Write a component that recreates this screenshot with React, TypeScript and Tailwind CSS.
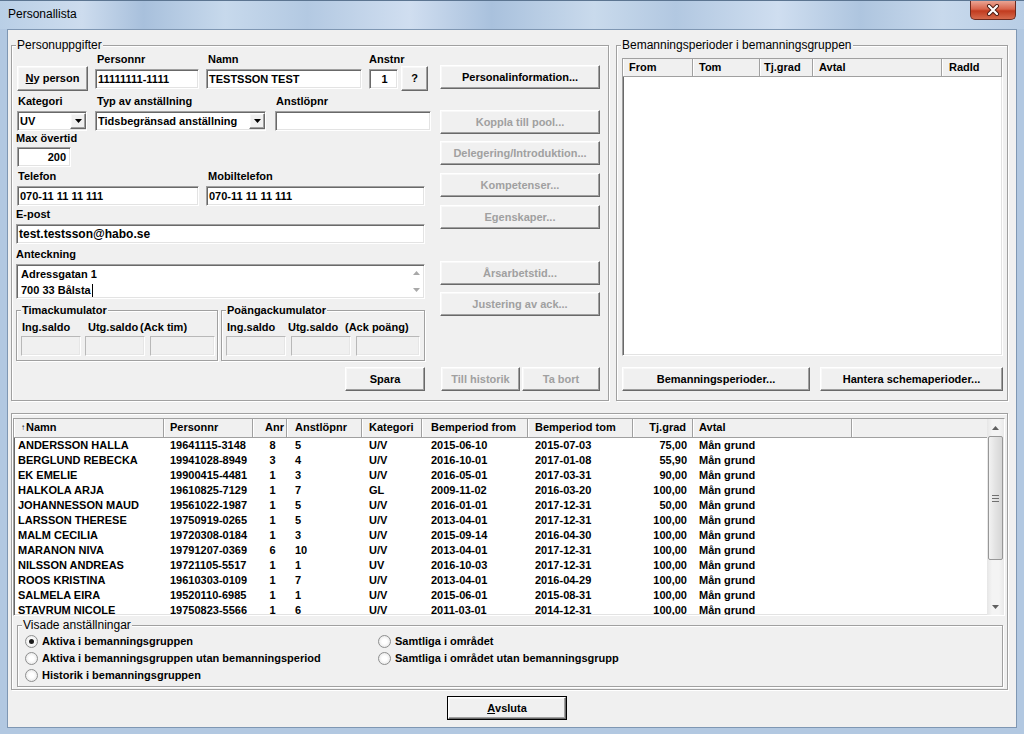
import React from 'react';

type P = { className?: string; children?: React.ReactNode };

const sunken =
  'border border-t-[#a0a0a0] border-l-[#a0a0a0] border-b-white border-r-white shadow-[inset_1px_1px_0_#696969,inset_-1px_-1px_0_#e3e3e3]';
const raised =
  'border border-t-white border-l-white border-b-[#696969] border-r-[#696969] shadow-[inset_-1px_-1px_0_#a0a0a0,inset_1px_1px_0_#f8f8f8] bg-[#f0f0f0]';
const etched = 'border border-[#a0a0a0] shadow-[inset_1px_1px_0_#fff,1px_1px_0_#fff]';

function Label({ className = '', children }: P) {
  return <div className={`h-[14px] leading-[14px] text-[11px] font-bold whitespace-nowrap ${className}`}>{children}</div>;
}

function Input({ className = '', children }: P) {
  return (
    <div className={`h-[20px] bg-white ${sunken} text-[11px] font-bold leading-[18px] pl-[2px] whitespace-nowrap overflow-hidden ${className}`}>
      {children}
    </div>
  );
}

function Dim({ className = '' }: P) {
  return <div className={`h-[20px] border border-t-[#b8b8b8] border-l-[#b8b8b8] border-b-white border-r-white shadow-[inset_-1px_-1px_0_#e6e6e6] ${className}`} />;
}

function Btn({ className = '', children, off = false }: P & { off?: boolean }) {
  return (
    <div
      className={`${raised} flex items-center justify-center text-[11px] font-bold whitespace-nowrap ${
        off ? 'text-[#a0a0a0]' : 'text-black'
      } ${className}`}
    >
      {children}
    </div>
  );
}

function Arrow({ up = false, color = '#000' }: { up?: boolean; color?: string }) {
  return (
    <svg width="7" height="4" viewBox="0 0 7 4">
      <path d={up ? 'M0 4 L3.5 0 L7 4 Z' : 'M0 0 L7 0 L3.5 4 Z'} fill={color} />
    </svg>
  );
}

function Select({ className = '', children }: P) {
  return (
    <div className={`h-[20px] bg-white ${sunken} flex items-center text-[11px] font-bold pl-[2px] ${className}`}>
      <span className="flex-1 whitespace-nowrap overflow-hidden">{children}</span>
      <div className={`${raised} w-[16px] h-[16px] flex items-center justify-center`}>
        <Arrow />
      </div>
    </div>
  );
}

function Group({ className = '', title, bold = false, children }: P & { title: string; bold?: boolean }) {
  return (
    <div className={`relative ${etched} ${className}`}>
      <div
        className={`absolute -top-[8px] left-[4px] px-[1px] bg-[#f0f0f0] leading-[14px] whitespace-nowrap ${
          bold ? 'text-[11px] font-bold' : 'text-[12px]'
        }`}
      >
        {title}
      </div>
      {children}
    </div>
  );
}

function Radio({ on = false, children }: P & { on?: boolean }) {
  return (
    <div className="h-[17px] flex items-center">
      <div className="w-[13px] h-[13px] rounded-full border border-[#8e8f8f] bg-[radial-gradient(circle,#ffffff_30%,#dedede)] flex items-center justify-center">
        {on && <div className="w-[5px] h-[5px] rounded-full bg-[#1c1c1c]" />}
      </div>
      <span className="ml-[4px] text-[11px] font-bold whitespace-nowrap">{children}</span>
    </div>
  );
}

const rows = [
  ['ANDERSSON HALLA', '19641115-3148', '8', '5', 'U/V', '2015-06-10', '2015-07-03', '75,00', 'Mån grund'],
  ['BERGLUND REBECKA', '19941028-8949', '3', '4', 'U/V', '2016-10-01', '2017-01-08', '55,90', 'Mån grund'],
  ['EK EMELIE', '19900415-4481', '1', '3', 'U/V', '2016-05-01', '2017-03-31', '90,00', 'Mån grund'],
  ['HALKOLA ARJA', '19610825-7129', '1', '7', 'GL', '2009-11-02', '2016-03-20', '100,00', 'Mån grund'],
  ['JOHANNESSON MAUD', '19561022-1987', '1', '5', 'U/V', '2016-01-01', '2017-12-31', '50,00', 'Mån grund'],
  ['LARSSON THERESE', '19750919-0265', '1', '5', 'U/V', '2013-04-01', '2017-12-31', '100,00', 'Mån grund'],
  ['MALM CECILIA', '19720308-0184', '1', '3', 'U/V', '2015-09-14', '2016-04-30', '100,00', 'Mån grund'],
  ['MARANON NIVA', '19791207-0369', '6', '10', 'U/V', '2013-04-01', '2017-12-31', '100,00', 'Mån grund'],
  ['NILSSON ANDREAS', '19721105-5517', '1', '1', 'UV', '2016-10-03', '2017-12-31', '100,00', 'Mån grund'],
  ['ROOS KRISTINA', '19610303-0109', '1', '7', 'U/V', '2013-04-01', '2016-04-29', '100,00', 'Mån grund'],
  ['SALMELA EIRA', '19520110-6985', '1', '1', 'U/V', '2015-06-01', '2015-08-31', '100,00', 'Mån grund'],
  ['STAVRUM NICOLE', '19750823-5566', '1', '6', 'U/V', '2011-03-01', '2014-12-31', '100,00', 'Mån grund'],
];

// column widths + cell padding for the staff list
const cols = [
  { w: 'w-[150px]', cell: 'pl-[4px]', head: 'pl-[7px]' },
  { w: 'w-[89px]', cell: 'pl-[6px]', head: 'pl-[6px]' },
  { w: 'w-[34px]', cell: 'text-center pl-[5px]', head: 'text-center pl-[10px]' },
  { w: 'w-[75px]', cell: 'pl-[8px]', head: 'pl-[8px]' },
  { w: 'w-[60px]', cell: 'pl-[7px]', head: 'pl-[7px]' },
  { w: 'w-[106px]', cell: 'pl-[9px]', head: 'pl-[9px]' },
  { w: 'w-[105px]', cell: 'pl-[7px]', head: 'pl-[7px]' },
  { w: 'w-[60px]', cell: 'text-right pr-[6px]', head: 'text-right pr-[6px]' },
  { w: 'w-[159px]', cell: 'pl-[6px]', head: 'pl-[6px]' },
];
const heads = ['Namn', 'Personnr', 'Anr', 'Anstlöpnr', 'Kategori', 'Bemperiod from', 'Bemperiod tom', 'Tj.grad', 'Avtal'];

const headCell = 'h-full border-r border-r-[#a0a0a0] shadow-[inset_1px_0_0_#fff] leading-[17px] text-[11px] font-bold whitespace-nowrap';

export default function App() {
  return (
    <div className="w-[1024px] h-[734px] overflow-hidden flex flex-col bg-[#b2c8e1] font-['Liberation_Sans',Arial,sans-serif] text-black">
      {/* Title bar */}
      <div className="h-[29px] flex items-start bg-[linear-gradient(90deg,#b9cfe6_0%,#cddcee_8%,#a8c0dc_14%,#c7d9ec_22%,#b3c9e2_30%,#d0def0_40%,#a9c1dd_48%,#c9daec_58%,#b2c8e1_66%,#cfdef0_76%,#aec5df_84%,#c8d9ec_92%,#b8cde5_100%)] border-t border-[#5c7591]">
        <div className="pl-[8px] pt-[6px] text-[12px] leading-[14px]">Personallista</div>
        <div className="ml-auto mr-[8px] w-[46px] h-[19px] rounded-b-[5px] border border-t-0 border-[#6b2a1f] bg-[linear-gradient(#eaa493,#d8644b_45%,#c13b1f_55%,#d56a4c)] flex items-center justify-center">
          <svg width="14" height="12" viewBox="0 0 14 12">
            <path d="M3 2 L11 10 M11 2 L3 10" stroke="#4a1a12" strokeWidth="4" strokeLinecap="round" />
            <path d="M3 2 L11 10 M11 2 L3 10" stroke="#fff" strokeWidth="2.2" strokeLinecap="round" />
          </svg>
        </div>
      </div>

      {/* Client area */}
      <div className="mx-[7px] w-[1010px] h-[699px] border border-[#7f97b3] bg-[#f0f0f0] flex flex-col">
        {/* Top section */}
        <div className="flex pl-[3px] pt-[15px] gap-[7px]">
          <Group title="Personuppgifter" className="w-[598px] h-[356px] flex pl-[5px] pr-[8px]">
            {/* Form */}
            <div className="w-[415px] flex flex-col pt-[6px]">
              <div className="flex items-end h-[39px]">
                <Btn className="w-[71px] h-[25px]">
                  <span className="underline">N</span>y person
                </Btn>
                <div className="ml-[7px] w-[104px] mb-[2px]">
                  <Label className="pl-[2px]">Personnr</Label>
                  <Input className="mt-[3px]">11111111-1111</Input>
                </div>
                <div className="ml-[7px] w-[156px] mb-[2px]">
                  <Label className="pl-[2px]">Namn</Label>
                  <Input className="mt-[3px]">TESTSSON TEST</Input>
                </div>
                <div className="ml-[7px] w-[29px] mb-[2px]">
                  <Label>Anstnr</Label>
                  <Input className="mt-[3px] text-center pl-0">1</Input>
                </div>
                <Btn className="ml-[3px] w-[27px] h-[25px]">?</Btn>
              </div>

              <div className="flex mt-[3px]">
                <div className="w-[70px]">
                  <Label className="pl-[1px]">Kategori</Label>
                  <Select className="mt-[3px]">UV</Select>
                </div>
                <div className="ml-[8px] w-[171px]">
                  <Label className="pl-[2px]">Typ av anställning</Label>
                  <Select className="mt-[3px]">Tidsbegränsad anställning</Select>
                </div>
                <div className="ml-[9px] w-[156px]">
                  <Label className="pl-[1px]">Anstlöpnr</Label>
                  <Input className="mt-[3px]" />
                </div>
              </div>

              <div className="flex flex-col">
                <Label className="-ml-[1px]">Max övertid</Label>
                <Input className="mt-[2px] w-[54px] text-right pr-[4px]">200</Input>
              </div>

              <div className="flex mt-[2px]">
                <div className="w-[182px]">
                  <Label className="pl-[1px]">Telefon</Label>
                  <Input className="mt-[3px]">070-11 11 11 111</Input>
                </div>
                <div className="ml-[7px] w-[219px]">
                  <Label className="pl-[2px]">Mobiltelefon</Label>
                  <Input className="mt-[3px]">070-11 11 11 111</Input>
                </div>
              </div>

              <div className="flex flex-col mt-[1px] -ml-[1px]">
                <Label>E-post</Label>
                <Input className="mt-[3px] w-[409px] text-[12px]">test.testsson@habo.se</Input>
              </div>

              <div className="flex flex-col mt-[3px] -ml-[1px]">
                <Label>Anteckning</Label>
                <div className={`mt-[3px] w-[409px] h-[35px] bg-white ${sunken} flex`}>
                  <div className="flex-1 pl-[4px] pt-[1px] text-[11px] font-bold leading-[16px]">
                    <div>Adressgatan 1</div>
                    <div className="flex items-center">
                      700 33 Bålsta<span className="inline-block w-[1px] h-[13px] bg-black ml-[1px]" />
                    </div>
                  </div>
                  <div className="w-[15px] flex flex-col items-center justify-between py-[6px]">
                    <Arrow up color="#a8a8a8" />
                    <Arrow color="#a8a8a8" />
                  </div>
                </div>
              </div>

              <div className="flex mt-[11px] -ml-[1px]">
                <Group bold title="Timackumulator" className="w-[202px] h-[51px] pt-[9px]">
                  <div className="flex pl-[5px] text-[11px] font-bold leading-[14px] whitespace-nowrap">
                    <span className="w-[66px]">Ing.saldo</span>
                    <span className="w-[52px]">Utg.saldo</span>
                    <span>(Ack tim)</span>
                  </div>
                  <div className="flex pl-[4px] mt-[2px]">
                    <Dim className="w-[60px]" />
                    <Dim className="ml-[4px] w-[60px]" />
                    <Dim className="ml-[5px] w-[65px]" />
                  </div>
                </Group>
                <Group bold title="Poängackumulator" className="ml-[3px] w-[204px] h-[51px] pt-[9px]">
                  <div className="flex pl-[5px] text-[11px] font-bold leading-[14px] whitespace-nowrap">
                    <span className="w-[61px]">Ing.saldo</span>
                    <span className="w-[57px]">Utg.saldo</span>
                    <span>(Ack poäng)</span>
                  </div>
                  <div className="flex pl-[4px] mt-[2px]">
                    <Dim className="w-[60px]" />
                    <Dim className="ml-[5px] w-[60px]" />
                    <Dim className="ml-[5px] w-[64px]" />
                  </div>
                </Group>
              </div>

              <div className="flex mt-[6px]">
                <Btn className="ml-[328px] w-[80px] h-[24px]">Spara</Btn>
              </div>
            </div>

            {/* Action buttons */}
            <div className="ml-[8px] w-[160px] flex flex-col pt-[19px]">
              <Btn className="h-[24px]">Personalinformation...</Btn>
              <Btn off className="h-[24px] mt-[21px]">Koppla till pool...</Btn>
              <Btn off className="h-[24px] mt-[7px]">Delegering/Introduktion...</Btn>
              <Btn off className="h-[24px] mt-[8px]">Kompetenser...</Btn>
              <Btn off className="h-[24px] mt-[8px]">Egenskaper...</Btn>
              <Btn off className="h-[24px] mt-[32px]">Årsarbetstid...</Btn>
              <Btn off className="h-[24px] mt-[7px]">Justering av ack...</Btn>
              <div className="flex mt-[51px]">
                <Btn off className="ml-[1px] w-[79px] h-[24px]">Till historik</Btn>
                <Btn off className="ml-[2px] w-[78px] h-[24px]">Ta bort</Btn>
              </div>
            </div>
          </Group>

          <Group title="Bemanningsperioder i bemanningsgruppen" className="w-[392px] h-[356px] pl-[5px] pt-[12px]">
            <div className={`w-[381px] h-[298px] bg-white ${sunken} flex flex-col`}>
              <div className="h-[18px] flex bg-[#f0f0f0] border-b border-b-[#a0a0a0]">
                <div className={`w-[70px] pl-[6px] ${headCell}`}>From</div>
                <div className={`w-[67px] pl-[6px] ${headCell}`}>Tom</div>
                <div className={`w-[53px] pl-[4px] ${headCell}`}>Tj.grad</div>
                <div className={`w-[129px] pl-[6px] ${headCell}`}>Avtal</div>
                <div className={`flex-1 pl-[7px] ${headCell}`}>RadId</div>
              </div>
            </div>
            <div className="flex mt-[11px]">
              <Btn className="w-[188px] h-[24px]">Bemanningsperioder...</Btn>
              <Btn className="ml-[10px] w-[183px] h-[24px]">Hantera schemaperioder...</Btn>
            </div>
          </Group>
        </div>

        {/* Staff list panel */}
        <div className={`mt-[12px] ml-[3px] w-[997px] h-[277px] ${etched} flex flex-col`}>
          <div className={`ml-[1px] mt-[4px] w-[992px] h-[198px] bg-white ${sunken} flex`}>
            <div className="flex-1 flex flex-col overflow-hidden">
              <div className="h-[19px] flex bg-[#f0f0f0] border-b border-b-[#a0a0a0] shrink-0">
                {heads.map((h, i) => (
                  <div key={h} className={`${cols[i].w} ${cols[i].head} ${headCell}`}>
                    {i === 0 && <span className="text-[8px] align-top mr-[1px]">↑</span>}
                    {h}
                  </div>
                ))}
                <div className={`flex-1 ${headCell} border-r-0`} />
              </div>
              {rows.map((r) => (
                <div key={r[1]} className="h-[15px] flex shrink-0 text-[11px] font-bold leading-[15px] whitespace-nowrap">
                  {r.map((c, i) => (
                    <div key={i} className={`${cols[i].w} ${cols[i].cell}`}>
                      {c}
                    </div>
                  ))}
                </div>
              ))}
            </div>
            {/* Scrollbar */}
            <div className="w-[17px] flex flex-col bg-[linear-gradient(90deg,#e6e6e6,#f4f4f4_30%,#f4f4f4_70%,#e9e9e9)]">
              <div className="h-[17px] flex items-center justify-center">
                <Arrow up color="#606060" />
              </div>
              <div className="mx-[1px] h-[124px] rounded-[2px] border border-[#979797] bg-[linear-gradient(90deg,#f2f2f2,#e3e3e3_50%,#d6d6d6)] flex flex-col items-center justify-center gap-[2px]">
                <div className="w-[7px] h-[1px] bg-[#707070]" />
                <div className="w-[7px] h-[1px] bg-[#707070]" />
                <div className="w-[7px] h-[1px] bg-[#707070]" />
              </div>
              <div className="flex-1" />
              <div className="h-[17px] flex items-center justify-center">
                <Arrow color="#606060" />
              </div>
            </div>
          </div>

          <Group title="Visade anställningar" className="mt-[9px] ml-[5px] w-[986px] h-[62px] pt-[7px] pl-[7px] flex">
            <div className="w-[353px] flex flex-col">
              <Radio on>Aktiva i bemanningsgruppen</Radio>
              <Radio>Aktiva i bemanningsgruppen utan bemanningsperiod</Radio>
              <Radio>Historik i bemanningsgruppen</Radio>
            </div>
            <div className="flex flex-col">
              <Radio>Samtliga i området</Radio>
              <Radio>Samtliga i området utan bemanningsgrupp</Radio>
            </div>
          </Group>
        </div>

        <div className="mt-[6px] pl-[439px]">
          <div className="w-[120px] h-[24px] border border-black">
            <Btn className="w-full h-full">
              <span className="underline">A</span>vsluta
            </Btn>
          </div>
        </div>
      </div>
    </div>
  );
}
